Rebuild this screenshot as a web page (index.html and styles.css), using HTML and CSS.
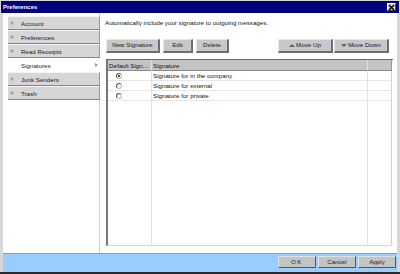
FILE: index.html
```html
<!DOCTYPE html>
<html>
<head>
<meta charset="utf-8">
<link rel="stylesheet" href="styles.css">
</head>
<body>
<div class="window">
  <div class="titlebar">
    <span class="title">Preferences</span>
    <span class="close"><svg width="7" height="7" viewBox="0 0 7 7"><path d="M1 1L6 6M6 1L1 6" stroke="#000" stroke-width="1.4"/></svg></span>
  </div>
  <div class="body">
    <div class="sidebar">
      <div class="nav-item"><span class="arrow"></span>Account</div>
      <div class="nav-item"><span class="arrow"></span>Preferences</div>
      <div class="nav-item"><span class="arrow"></span>Read Receipts</div>
      <div class="nav-item selected"><span class="label">Signatures</span><span class="arrow"></span></div>
      <div class="nav-item"><span class="arrow"></span>Junk Senders</div>
      <div class="nav-item"><span class="arrow"></span>Trash</div>
    </div>
    <div class="content">
      <p class="intro">Automatically include your signature to outgoing messages.</p>
      <div class="toolbar">
        <div class="group">
          <button class="btn w-new">New Signature</button>
          <button class="btn w-edit">Edit</button>
          <button class="btn w-del">Delete</button>
        </div>
        <div class="group tight">
          <button class="btn w-move"><span class="tri up"></span>Move Up</button>
          <button class="btn w-move"><span class="tri down"></span>Move Down</button>
        </div>
      </div>
      <div class="grid">
        <div class="hd">Default Sign...</div>
        <div class="hd">Signature</div>
        <div class="hd last"></div>

        <div class="cell"><span class="radio checked"></span></div>
        <div class="cell">Signature for in the company</div>
        <div class="cell last"></div>

        <div class="cell"><span class="radio"></span></div>
        <div class="cell">Signature for external</div>
        <div class="cell last"></div>

        <div class="cell"><span class="radio"></span></div>
        <div class="cell">Signature for private</div>
        <div class="cell last"></div>

        <div class="fill"></div>
        <div class="fill"></div>
        <div class="fill last"></div>
      </div>
    </div>
  </div>
  <div class="footer">
    <button class="btn fbtn ok">OK</button>
    <button class="btn fbtn">Cancel</button>
    <button class="btn fbtn">Apply</button>
  </div>
</div>
</body>
</html>
```

FILE: styles.css
```css
* { box-sizing: border-box; }
html, body { margin: 0; padding: 0; }
body {
  width: 400px;
  height: 274px;
  font-family: "Liberation Sans", Arial, sans-serif;
  font-size: 6.2px;
  color: #111;
  overflow: hidden;
}
.window {
  width: 400px;
  height: 274px;
  background: #d6d6d6;
  padding: 1px 1px 0 1px;
  border-bottom: 2px solid #2a2a2a;
  display: flex;
  flex-direction: column;
}
.titlebar {
  height: 12px;
  background: #00007f;
  display: flex;
  align-items: center;
  justify-content: space-between;
  padding: 0 3px 0 2px;
}
.title {
  color: #fff;
  font-weight: bold;
  font-size: 6px;
}
.close {
  width: 9px;
  height: 8px;
  background: #d4d0c8;
  border-top: 1px solid #fff;
  border-left: 1px solid #fff;
  border-right: 1px solid #404040;
  border-bottom: 1px solid #404040;
  display: flex;
  align-items: center;
  justify-content: center;
}
.close svg { display: block; }
.body {
  height: 240px;
  display: flex;
  padding: 0 2px;
}
.sidebar {
  width: 97px;
  background: #fff;
  border-right: 1px solid #d0d0d0;
  padding: 3px 0 0 5px;
  display: flex;
  flex-direction: column;
}
.nav-item {
  height: 14px;
  width: 92px;
  background: #d6d6d6;
  border-top: 1px solid #f4f4f4;
  border-bottom: 1px solid #858585;
  border-right: 1px solid #9a9a9a;
  display: flex;
  align-items: center;
  color: #1a1a1a;
}
.nav-item .arrow {
  width: 0;
  height: 0;
  border-top: 2px solid transparent;
  border-bottom: 2px solid transparent;
  border-left: 3px solid #9a9a9a;
  margin: 0 7px 0 3px;
}
.nav-item.selected {
  background: #fff;
  border-color: #fff;
  justify-content: space-between;
  padding-left: 13px;
}
.nav-item.selected .arrow { margin: 0 1px 0 0; }
.content {
  flex: 1;
  background: #fff;
  padding: 6px 4px 7px 6px;
  display: flex;
  flex-direction: column;
}
.intro {
  margin: 0 0 0 -1px;
  line-height: 8px;
  height: 8px;
}
.toolbar {
  margin-top: 12px;
  margin-bottom: 6px;
  display: flex;
  justify-content: space-between;
  padding-right: 4px;
}
.group { display: flex; gap: 3px; }
.group.tight { gap: 1px; }
.btn {
  font-family: "Liberation Sans", Arial, sans-serif;
  font-size: 6.2px;
  color: #1a1a1a;
  height: 14px;
  padding: 0;
  background: #c8c8c8;
  border-top: 1px solid #e6e6e6;
  border-left: 1px solid #e6e6e6;
  border-right: 2px solid #6e6e6e;
  border-bottom: 2px solid #6e6e6e;
  display: flex;
  align-items: center;
  justify-content: center;
  line-height: 1;
}
.w-new { width: 54px; }
.w-edit { width: 30px; }
.w-del { width: 33px; }
.w-move { width: 55px; }
.tri {
  width: 0;
  height: 0;
  border-left: 3px solid transparent;
  border-right: 3px solid transparent;
  margin-right: 1px;
}
.tri.up { border-bottom: 3px solid #666; }
.tri.down { border-top: 3px solid #666; }
.grid {
  flex: 1;
  display: grid;
  grid-template-columns: 44px 216px 24px;
  grid-template-rows: 11px 10px 10px 10px 1fr;
  border-left: 2px solid #777;
  border-top: 1px solid #6a6a6a;
  border-bottom: 1px solid #d8d8d8;
  width: 287px;
}
.hd {
  background: #c4c4c4;
  border-right: 1px solid #e2e2e2;
  border-bottom: 1px solid #8a8a8a;
  display: flex;
  align-items: center;
  padding-left: 1px;
  white-space: nowrap;
  overflow: hidden;
}
.hd.last { border-right: 1px solid #9a9a9a; }
.cell {
  border-right: 1px solid #e0e0e0;
  border-bottom: 1px solid #e6e6e6;
  display: flex;
  align-items: center;
  padding-left: 1px;
  white-space: nowrap;
}
.cell.last, .fill.last { border-right: 1px solid #cfcfcf; }
.fill { border-right: 1px solid #e0e0e0; }
.radio {
  width: 6px;
  height: 6px;
  border-radius: 50%;
  border: 1px solid #555;
  border-right-color: #bbb;
  border-bottom-color: #bbb;
  margin-left: 7px;
  background: #fff;
  position: relative;
}
.radio.checked::after {
  content: "";
  position: absolute;
  left: 1px;
  top: 1px;
  width: 2px;
  height: 2px;
  border-radius: 50%;
  background: #111;
}
.footer {
  height: 19px;
  margin: 0 2px;
  background: #99ccff;
  border-top: 1px solid #9a9a9a;
  display: flex;
  justify-content: flex-end;
  gap: 2px;
  padding: 2px 1px 0 0;
}
.fbtn {
  width: 38px;
  height: 12px;
  background: #c4c4c4;
  border-top: 1px solid #e0e0e0;
  border-left: 1px solid #e0e0e0;
  border-right: 1px solid #555;
  border-bottom: 1px solid #555;
}
.ok { letter-spacing: 1.5px; }
```
